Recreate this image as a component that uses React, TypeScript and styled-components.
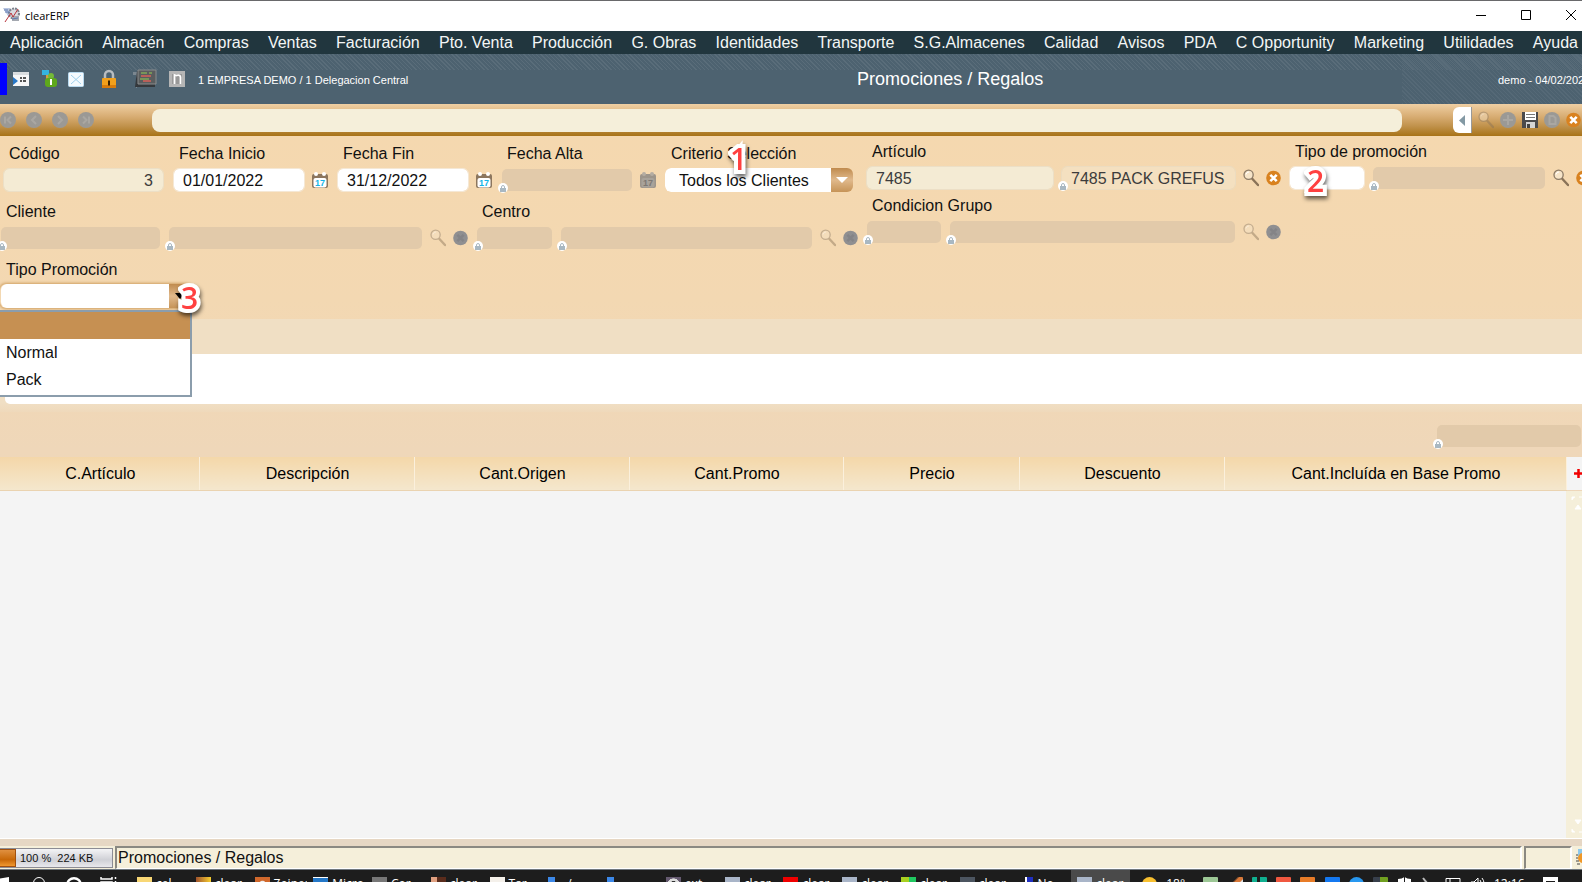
import React from "react";
import styled, { createGlobalStyle, css } from "styled-components";

const GlobalStyle = createGlobalStyle`
  *, *::before, *::after { box-sizing: border-box; }
  body { margin: 0; overflow: hidden; font-family: "Liberation Sans", Arial, sans-serif; font-size: 16px; color: #111; }
  button, input, select { font: inherit; color: inherit; margin: 0; }
  button { border: 0; padding: 0; background: none; }
  svg { display: block; flex: none; }
`;

const App = styled.div`
  display: flex;
  flex-direction: column;
  height: 100vh;
  min-height: 600px;
  overflow: hidden;
  background: linear-gradient(#f5d8af 136px, #f3d8b2 300px, #efd7b9 450px, #e6d7c4 840px);
`;

/* Window title */
const TitleBar = styled.header`
  flex: 0 0 31px;
  display: flex;
  align-items: center;
  gap: 5px;
  padding: 0 2px 2px 3px;
  border-top: 1px solid #69696b;
  background: #fff;
  font: 11px "Open Sans", sans-serif;
  color: #000;
`;
const WindowButtons = styled.div`
  display: flex;
  gap: 35px;
  margin-left: auto;
  padding-right: 4px;
`;

/* Menu */
const MenuBar = styled.nav`
  flex: 0 0 23px;
  display: flex;
  justify-content: space-between;
  align-items: flex-end;
  padding: 0 4px 0 10px;
  background: #21363e;
`;
const MenuItem = styled.a`
  color: #f4f6f6;
  text-decoration: none;
  white-space: nowrap;
  line-height: 22px;
`;

/* Company header */
const CompanyBar = styled.div`
  flex: 0 0 50px;
  display: flex;
  align-items: center;
  background:
    repeating-linear-gradient(45deg, #ffffff12 0 1px, transparent 1px 3px) 0 0 / 100% 16px no-repeat,
    repeating-linear-gradient(45deg, #ffffff0c 0 1px, transparent 1px 3px) 100% 0 / 180px 100% no-repeat,
    #4d6270;
  color: #fff;
  font-size: 11px;
  line-height: 14px;
  white-space: nowrap;
`;
const Marker = styled.div`
  width: 7px;
  height: 32px;
  background: #00f;
`;
const Shortcuts = styled.div`
  display: flex;
  align-items: center;
  justify-content: space-between;
  width: 172px;
  margin: 0 13px 0 6px;
`;
const ScreenTitle = styled.h1`
  flex: 1;
  margin: 0;
  padding-right: 6px;
  font-size: 18px;
  font-weight: 400;
  text-align: center;
`;
const Company = styled.span`
  padding-top: 2px;
`;
const Session = styled(Company)`
  width: 84px;
  overflow: hidden;
`;

/* Record toolbar */
const Toolbar = styled.div`
  flex: 0 0 32px;
  display: flex;
  align-items: center;
  background: linear-gradient(#efcfa3, #d7ac72 40%, #c0914a 70%, #a87318);
`;
const NavButtons = styled.div`
  display: flex;
  gap: 10px;
`;
const QuickSearch = styled.input`
  flex: 1;
  min-width: 0;
  height: 23px;
  margin: 0 51px 0 58px;
  padding: 0 8px;
  border: 0;
  border-radius: 8px;
  background: #f5efda;
`;
const Actions = styled.div`
  display: flex;
  align-items: center;
  gap: 6px;
`;
const CollapseButton = styled.button`
  display: grid;
  place-items: center;
  width: 19px;
  height: 26px;
  border-right: 1px solid #999;
  border-radius: 6px 0 0 6px;
  background: #fff;
`;

/* Form */
const Form = styled.form`
  flex: none;
  display: flex;
  gap: 7px;
  padding-bottom: 11px;
`;
const Panel = styled.div<{ $tight?: boolean }>`
  flex: none;
  display: flex;
  flex-direction: column;
  gap: ${(p) => (p.$tight ? 4 : 8)}px;
  padding-top: ${(p) => (p.$tight ? 4 : 6)}px;
`;
const FormRow = styled.div<{ $spaced?: boolean }>`
  display: flex;
  gap: ${(p) => (p.$spaced ? 9 : 7)}px;
  padding-left: ${(p) => (p.$spaced ? 3 : 0)}px;
`;
const Cell = styled.div`
  position: relative;
`;
const Label = styled.label`
  display: block;
  padding-left: 6px;
  margin-bottom: 2px;
  line-height: 24px;
  white-space: nowrap;
`;
const Controls = styled.div`
  display: flex;
  align-items: center;
  gap: 7px;
`;

type Look = "edit" | "key" | "text" | "off";
const looks = {
  edit: css`background-color: #fff; border-color: #f5e8d5;`,
  key: css`background-color: #f4ebd4; border-color: #ecdfc6; color: #3c3c3c;`,
  text: css`background-color: #f4e0c0; border-color: #ecdcc0; color: #3c3c3c;`,
  off: css`background-color: #e2caaa; border-color: transparent;`,
};
const FieldBox = styled.div<{ $w: number }>`
  position: relative;
  width: ${(p) => p.$w}px;
`;
const Input = styled.input<{ $look: Look; $right?: boolean }>`
  display: block;
  width: 100%;
  height: 24px;
  padding: 1px 10px 0 9px;
  border: 1px solid;
  border-radius: 6px;
  background-clip: padding-box;
  text-align: ${(p) => (p.$right ? "right" : "left")};
  outline: 0;
  ${(p) => looks[p.$look]}
`;
const LockBadge = styled.span`
  position: absolute;
  left: -3px;
  bottom: -1px;
  display: grid;
  place-items: center;
  width: 10px;
  height: 10px;
  border-radius: 5px;
  background: #fff;
`;
const Combo = styled.div`
  position: relative;
  display: flex;
  width: 188px;
  height: 24px;
  border-radius: 6px;
  overflow: hidden;
`;
const Select = styled.select`
  flex: 1;
  appearance: none;
  padding: 0 0 0 14px;
  border: 0;
  border-radius: 6px 0 0 6px;
  background: #fff;
  outline: 0;
`;
const ComboArrow = styled.span`
  display: grid;
  place-items: center;
  width: 22px;
  background: linear-gradient(#c08b4e, #e0b98c 50%, #c69458);
  pointer-events: none;
`;
const OpenCombo = styled(Combo)`
  width: 191px;
  padding-left: 1px;
  box-shadow: 0 0 3px 1px #cf9f60;
`;
const Popup = styled.ul`
  position: absolute;
  z-index: 2;
  left: 0;
  top: 52px;
  width: 192px;
  margin: 0;
  padding: 0 0 2px;
  border: 2px solid #8b9dac;
  border-left: 0;
  background: #fff;
  list-style: none;
`;
const Option = styled.li<{ $active?: boolean }>`
  height: 27px;
  padding-left: 6px;
  line-height: 27px;
  background: ${(p) => (p.$active ? "#c69052" : "#fff")};
`;
const Callout = styled.span<{ $x: number; $y: number }>`
  position: absolute;
  z-index: 3;
  left: ${(p) => p.$x}px;
  top: ${(p) => p.$y}px;
  font: 600 30px/32px "Open Sans", sans-serif;
  color: #ff4040;
  -webkit-text-stroke: 8px #fff;
  paint-order: stroke fill;
  stroke-linejoin: round;
  filter: drop-shadow(1px 3px 2px #0009);
  pointer-events: none;
`;

/* Notes band and totals */
const NotesBand = styled.section`
  flex: none;
  padding: 35px 0 8px 5px;
  background: linear-gradient(#f0dfc4 90%, #efd9bb);
`;
const NotesArea = styled.div`
  height: 50px;
  border-radius: 0 0 0 5px;
  background: #fff;
`;
const TotalsRow = styled.div`
  flex: none;
  display: flex;
  justify-content: flex-end;
  padding: 12px 0 9px;
  overflow: hidden;
`;

/* Lines grid */
const LinesTable = styled.table`
  flex: none;
  width: 100%;
  table-layout: fixed;
  border-collapse: collapse;
`;
const HeadCell = styled.th<{ $w: number }>`
  width: ${(p) => p.$w}px;
  height: 33px;
  padding: 2px 0 0 2px;
  border-right: 1px solid #fbf0dc;
  border-bottom: 1px solid #ead3b0;
  background: linear-gradient(#f4d7a9, #f4e7cd);
  font-weight: 400;
  color: #000;
`;
const AddCell = styled.th`
  width: 16px;
  padding: 0 0 2px 7px;
  background: #f4f4f4;
  overflow: hidden;
`;
const LinesBody = styled.div`
  flex: 1;
  display: flex;
  justify-content: flex-end;
  border-bottom: 1px solid #fff;
  background: #f4f4f4;
`;
const ScrollTrack = styled.div`
  display: flex;
  flex-direction: column;
  justify-content: space-between;
  align-items: flex-end;
  width: 16px;
  padding: 5px 0;
  background: #f5efda;
`;

/* Status bar */
const StatusBar = styled.footer`
  flex: 0 0 30px;
  display: flex;
  align-items: stretch;
  gap: 2px;
  padding-top: 7px;
  border-bottom: 1px solid #707880;
  background: linear-gradient(#e6d7c4 7px, #f5efda 7px);
`;
const Memory = styled.div`
  display: flex;
  align-items: center;
  width: 113px;
  margin: 2px 0 1px 0;
  border: 1px solid #8c8c94;
  border-left: 0;
  background: linear-gradient(#f4f4f6, #cfd0d6 60%, #e8e8ec);
  font-size: 11px;
  white-space: pre;
`;
const MemoryUsed = styled.span`
  width: 16px;
  height: 100%;
  margin-right: 4px;
  border: 1px solid #a05010;
  border-left: 0;
  background: linear-gradient(#e09040, #c86808 60%, #f09830);
`;
const StatusText = styled.div<{ $w?: number }>`
  flex: ${(p) => (p.$w ? `0 0 ${p.$w}px` : "1")};
  padding-left: 1px;
  border: 2px solid #fff;
  border-top-color: #8b8982;
  border-left-color: #8b8982;
  border-bottom-width: 1px;
  line-height: 20px;
`;
const StatusIcon = styled.div`
  width: 6px;
  margin-left: 2px;
  overflow: hidden;
  padding-top: 3px;
`;

/* Desktop task bar */
const TaskBar = styled.div`
  flex: 0 0 12px;
  display: flex;
  align-items: flex-start;
  overflow: hidden;
  background: #1d1d1d;
  color: #fff;
  font: 12px "Open Sans", sans-serif;
`;
const SystemButtons = styled.div`
  flex: none;
  display: flex;
  gap: 17px;
  width: 131px;
  padding-top: 7px;
`;
const Apps = styled.div`
  flex: 1;
  display: grid;
  grid-template-columns: repeat(17, minmax(0, 1fr));
`;
const AppButton = styled.button<{ $active?: boolean }>`
  display: flex;
  gap: 4px;
  height: 40px;
  padding: 7px 0 0 6px;
  overflow: hidden;
  align-items: flex-start;
  line-height: 14px;
  white-space: nowrap;
  background: ${(p) => (p.$active ? "#4a4a4a" : "none")};
`;
const AppIcon = styled.span<{ $c: string }>`
  flex: 0 0 15px;
  height: 15px;
  background: ${(p) => p.$c};
`;
const Tray = styled.div`
  flex: 0 0 452px;
  display: flex;
  justify-content: space-between;
  padding: 7px 24px 0 12px;
  line-height: 14px;
`;
const TrayIcon = styled(AppIcon)<{ $round?: boolean }>`
  border-radius: ${(p) => (p.$round ? 8 : 1)}px;
`;

/* Icons */
const SearchIcon = ({ dim }: { dim?: boolean }) => (
  <svg width="16" height="18" viewBox="0 0 16 18" opacity={dim ? 0.45 : 1}>
    <path d="M9 9.5 15 16" stroke="#8a7358" strokeWidth="2.4" strokeLinecap="round" />
    <circle cx="5.6" cy="5.8" r="4.6" fill="#f6e4c8" stroke="#8b7a66" strokeWidth="1.3" />
    <path d="M3 5.500a3 3 0 0 1 3-2.500" stroke="#fff" fill="none" />
  </svg>
);
const ClearIcon = ({ dim }: { dim?: boolean }) => (
  <svg width="16" height="16" viewBox="0 0 16 16">
    <circle cx="7.500" cy="8" r="7.300" fill={dim ? "#8f8f91" : "#d9821f"} />
    <path d="m4.300 4.800 6.400 6.400m0-6.400-6.400 6.400" stroke={dim ? "#848487" : "#fff"} strokeWidth="2.600" />
  </svg>
);
const CalendarIcon = ({ dim }: { dim?: boolean }) => (
  <svg width="16" height="18" viewBox="0 0 16 18">
    <rect y="3" width="16" height="14" rx="2" fill={dim ? "#9d958b" : "#8c765e"} />
    <rect x="1.500" y="7" width="13" height="9.500" rx="2" fill={dim ? "#a8a29a" : "#fff"} />
    <circle cx="4" cy="3" r="2" fill={dim ? "#b5ada2" : "#fff"} />
    <circle cx="12" cy="3" r="2" fill={dim ? "#b5ada2" : "#fff"} />
    <text x="8" y="15" textAnchor="middle" fontSize="9" fontWeight="bold" fill={dim ? "#7d7873" : "#14b4e6"}>17</text>
  </svg>
);
const LockGlyph = () => (
  <svg width="6" height="7" viewBox="0 0 6 7">
    <path d="M1.500 3V2a1.500 1.500 0 0 1 3 0v1" fill="none" stroke="#a9b8c2" />
    <rect y="3" width="6" height="4" fill="#a9b8c2" />
  </svg>
);
const RoundIcon = ({ d }: { d: string }) => (
  <svg width="16" height="16" viewBox="0 0 16 16">
    <circle cx="8" cy="8" r="8" fill="#9b9995" />
    <path d={d} fill="none" stroke="#aaa7a2" strokeWidth="2" />
  </svg>
);
const AppLogo = () => (
  <svg width="17" height="16" viewBox="0 0 17 16">
    <path d="M0 1h7l2 5-4 3z" fill="#b9c6e0" />
    <circle cx="11" cy="6.500" r="5" fill="#d9dbe0" stroke="#7d828c" strokeWidth="2" strokeDasharray="2 1" />
    <path d="M9 9h7v5H9z" fill="#a4a8b0" />
    <path d="M1 3h4M2 5h5M9 12l6-1" stroke="#5f78b0" />
    <path d="m2 15 6-9 2 4 5-8" fill="none" stroke="#b8323a" />
  </svg>
);

const Locked = ({ w, id, value = "", look = "off", label }: { w: number; id?: string; value?: string; look?: Look; label?: string }) => (
  <FieldBox $w={w}>
    <Input $look={look} id={id} readOnly value={value} aria-label={label} />
    <LockBadge><LockGlyph /></LockBadge>
  </FieldBox>
);
const IconButton = ({ label, children }: { label: string; children: React.ReactNode }) => (
  <button type="button" aria-label={label}>{children}</button>
);
const Lookup = ({ dim }: { dim?: boolean }) => (
  <>
    <IconButton label="Buscar"><SearchIcon dim={dim} /></IconButton>
    <IconButton label="Borrar"><ClearIcon dim={dim} /></IconButton>
  </>
);

const menu = ["Aplicación", "Almacén", "Compras", "Ventas", "Facturación", "Pto. Venta", "Producción", "G. Obras", "Identidades", "Transporte", "S.G.Almacenes", "Calidad", "Avisos", "PDA", "C Opportunity", "Marketing", "Utilidades", "Ayuda"];
const columns: [string, number][] = [["C.Artículo", 199], ["Descripción", 215], ["Cant.Origen", 215], ["Cant.Promo", 214], ["Precio", 176], ["Descuento", 205], ["Cant.Incluída en Base Promo", 342]];
const navIcons: [string, string][] = [["Primero", "M5 4.500v7M11 4.500 7.500 8l3.500 3.500"], ["Anterior", "M10 4 6 8l4 4"], ["Siguiente", "m6 4 4 4-4 4"], ["Último", "m5 4.500 3.500 3.500L5 11.500M11 4.500v7"]];
const apps: [string, string][] = [
  ["#f8d775", "cel"], ["linear-gradient(90deg,#a0522d,#f8d030)", "clear"], ["radial-gradient(#eee 30%,#d0682c 40%)", "Zoiper"], ["linear-gradient(#fff 1px,#2478c8 1px)", "Micro"],
  ["#777", "Cor"], ["linear-gradient(90deg,#e0a080 40%,#5a2c1c 40%)", "clear"], ["#f4f0ea", "Tar"], ["linear-gradient(90deg,#3c88e8 50%,transparent 50%)", "/"],
  ["linear-gradient(90deg,#3c88e8 50%,transparent 50%)", ""], ["radial-gradient(#333 30%,#ddd 35% 55%,#655a70 60%)", "ext"], ["#a9b5c8", "clear"], ["#f00000", "clear"], ["#a9b5c8", "clear"],
  ["linear-gradient(90deg,#a8d020 50%,#20c860 50%)", "clear"], ["#4c5560", "clear"], ["linear-gradient(90deg,transparent 50%,#fff 50% 60%,#2030c0 60%)", "No"], ["#a9b5c8", "clear"],
];
const tray = ["#9cc795", "linear-gradient(135deg,#1d1d1d 30%,#d87838 40% 55%,#ddd 60%)", "linear-gradient(90deg,#10b090 35%,#1d1d1d 35% 50%,#10b090 50%)", "#f05840", "#e87c28", "#1478f0", "#2898f0", "linear-gradient(90deg,#38404c 50%,#70a020 50%)"];

export default function PromotionsScreen() {
  return (
    <>
      <GlobalStyle />
      <App>
        <TitleBar>
          <AppLogo />
          <span>clearERP</span>
          <WindowButtons>
            <IconButton label="Minimizar"><svg width="10" height="10"><path d="M0 5.500h10" stroke="#000" /></svg></IconButton>
            <IconButton label="Maximizar"><svg width="10" height="10"><path d="M.5.5h9v9h-9z" fill="none" stroke="#000" /></svg></IconButton>
            <IconButton label="Cerrar"><svg width="10" height="10"><path d="m0 0 10 10M10 0 0 10" stroke="#000" /></svg></IconButton>
          </WindowButtons>
        </TitleBar>

        <MenuBar>{menu.map((m) => <MenuItem key={m} href="#">{m}</MenuItem>)}</MenuBar>

        <CompanyBar>
          <Marker />
          <Shortcuts>
            <IconButton label="Agenda">
              <svg width="16" height="16"><path d="M0 1h16v14H0z" fill="#f6f7f8" /><path d="M0 1h16v3H0z" fill="#d9dde0" /><path d="m0 6 5 4-5 4z" fill="#2878c8" /><path d="M7 7h2m1 0h3M7 10h2m1 0h3" stroke="#555" strokeWidth="2" /></svg>
            </IconButton>
            <IconButton label="Usuario">
              <svg width="16" height="18"><path d="M1 0h7v5H1z" fill="#34b4e0" /><path d="M5 5h3v5H5z" fill="#d0a040" /><circle cx="10" cy="6" r="3" fill="#74b838" /><rect x="4" y="8" width="12" height="9" rx="3" fill="#5ea81c" /><path d="M10 9v6" stroke="#fff" strokeWidth="2" /></svg>
            </IconButton>
            <IconButton label="Correo">
              <svg width="16" height="15"><rect x=".5" y=".5" width="15" height="14" rx="1" fill="#f4fafe" stroke="#b8daf0" /><path d="m3 3 10 9M13 3 3 12" fill="none" stroke="#9fd0ec" /></svg>
            </IconButton>
            <IconButton label="Bloquear">
              <svg width="26" height="20"><path d="M9 10V6a4 4 0 0 1 8 0v4" fill="none" stroke="#b8bcc0" strokeWidth="2.500" /><rect x="6" y="9" width="14" height="10" rx="1" fill="#f2a01c" /><path d="M6 16h14v3H6z" fill="#d87c0c" /><path d="M13 11.500v5" stroke="#3a2200" strokeWidth="2" /></svg>
            </IconButton>
            <IconButton label="Terminal">
              <svg width="24" height="20"><path d="M0 3h4v16H3V6H0z" fill="#7b8790" /><path d="M4 2h18v16H2z" fill="#34383c" /><path d="M5 1h18v14H5z" fill="#5a5d5e" stroke="#8a8d8e" /><path d="M8 4h6m2 0h3M7 10h9" stroke="#80a858" strokeWidth="1.500" /><path d="M8 7h10M10 12h8" stroke="#d86058" strokeWidth="1.500" /></svg>
            </IconButton>
            <IconButton label="Notas">
              <svg width="16" height="16"><path d="M0 0h16v16H0z" fill="#b5b5b5" /><path d="M3 3h10v10H3z" fill="#989898" /><path d="M5.500 13V4l2 .5c3-1 4 .5 4 2V13" fill="none" stroke="#fff" strokeWidth="1.800" /></svg>
            </IconButton>
          </Shortcuts>
          <Company>1 EMPRESA DEMO / 1 Delegacion Central</Company>
          <ScreenTitle>Promociones / Regalos</ScreenTitle>
          <Session>demo - 04/02/2022</Session>
        </CompanyBar>

        <Toolbar>
          <NavButtons>
            {navIcons.map(([n, d]) => <IconButton key={n} label={n}><RoundIcon d={d} /></IconButton>)}
          </NavButtons>
          <QuickSearch aria-label="Búsqueda rápida" />
          <Actions>
            <CollapseButton aria-label="Plegar"><svg width="6" height="11"><path d="M6 0v11L0 5.500z" fill="#8399a4" /></svg></CollapseButton>
            <IconButton label="Buscar"><SearchIcon dim /></IconButton>
            <IconButton label="Nuevo"><RoundIcon d="M8 3v10M3 8h10" /></IconButton>
            <IconButton label="Guardar">
              <svg width="16" height="16"><path d="M0 0h16v16H0z" fill="#4a4a4c" /><path d="M3 0h11v8H3z" fill="#fff" /><path d="M4 2.500h9M4 5.500h9" stroke="#777" /><path d="M4 10h9v6H4z" fill="#d4d4d4" /><path d="M5 12h3v4H5z" fill="#444" /></svg>
            </IconButton>
            <IconButton label="Eliminar"><RoundIcon d="M5.500 4h4l2 2v6h-6z" /></IconButton>
            <IconButton label="Cerrar"><ClearIcon /></IconButton>
          </Actions>
        </Toolbar>

        <Form>
          <Panel>
            <FormRow $spaced>
              <Cell>
                <Label htmlFor="codigo">Código</Label>
                <FieldBox $w={161}><Input id="codigo" $look="key" $right defaultValue="3" /></FieldBox>
              </Cell>
              <Cell>
                <Label htmlFor="inicio">Fecha Inicio</Label>
                <Controls>
                  <FieldBox $w={132}><Input id="inicio" $look="edit" defaultValue="01/01/2022" /></FieldBox>
                  <IconButton label="Calendario"><CalendarIcon /></IconButton>
                </Controls>
              </Cell>
              <Cell>
                <Label htmlFor="fin">Fecha Fin</Label>
                <Controls>
                  <FieldBox $w={132}><Input id="fin" $look="edit" defaultValue="31/12/2022" /></FieldBox>
                  <IconButton label="Calendario"><CalendarIcon /></IconButton>
                </Controls>
              </Cell>
              <Cell>
                <Label htmlFor="alta">Fecha Alta</Label>
                <Controls>
                  <Locked w={132} id="alta" />
                  <IconButton label="Calendario"><CalendarIcon dim /></IconButton>
                </Controls>
              </Cell>
              <Cell>
                <Label htmlFor="criterio">Criterio Selección</Label>
                <Combo>
                  <Select id="criterio"><option>Todos los Clientes</option></Select>
                  <ComboArrow><svg width="12" height="6"><path d="M0 0h12L6 6z" fill="#fff" /></svg></ComboArrow>
                </Combo>
                <Callout $x={65} $y={1}>1</Callout>
              </Cell>
            </FormRow>
            <FormRow>
              <Cell>
                <Label htmlFor="cliente">Cliente</Label>
                <Controls>
                  <Locked w={161} id="cliente" />
                  <Locked w={255} label="Nombre del cliente" />
                  <Lookup dim />
                </Controls>
              </Cell>
              <Cell>
                <Label htmlFor="centro">Centro</Label>
                <Controls>
                  <Locked w={77} id="centro" />
                  <Locked w={253} label="Nombre del centro" />
                  <Lookup dim />
                </Controls>
              </Cell>
            </FormRow>
            <FormRow>
              <Cell>
                <Label htmlFor="tipo">Tipo Promoción</Label>
                <OpenCombo>
                  <Select id="tipo" defaultValue=""><option value=""></option></Select>
                  <ComboArrow><svg width="10" height="6"><path d="M0 0h10L5 6z" fill="#000" /></svg></ComboArrow>
                </OpenCombo>
                <Popup role="listbox" aria-label="Tipo Promoción">
                  <Option role="option" aria-selected="true" $active />
                  <Option role="option" aria-selected="false">Normal</Option>
                  <Option role="option" aria-selected="false">Pack</Option>
                </Popup>
                <Callout $x={181} $y={24}>3</Callout>
              </Cell>
            </FormRow>
          </Panel>

          <Panel $tight>
            <FormRow>
              <Cell>
                <Label htmlFor="articulo">Artículo</Label>
                <Controls>
                  <FieldBox $w={188}><Input id="articulo" $look="key" defaultValue="7485" /></FieldBox>
                  <Locked w={175} look="text" value="7485 PACK GREFUS" label="Nombre del artículo" />
                  <Lookup />
                </Controls>
              </Cell>
              <Cell>
                <Label htmlFor="clase">Tipo de promoción</Label>
                <Controls>
                  <FieldBox $w={76}><Input id="clase" $look="edit" /></FieldBox>
                  <Locked w={174} label="Descripción del tipo" />
                  <Lookup />
                </Controls>
                <Callout $x={18} $y={25}>2</Callout>
              </Cell>
            </FormRow>
            <FormRow>
              <Cell>
                <Label htmlFor="grupo">Condicion Grupo</Label>
                <Controls>
                  <Locked w={76} id="grupo" />
                  <Locked w={287} label="Nombre del grupo" />
                  <Lookup dim />
                </Controls>
              </Cell>
            </FormRow>
          </Panel>
        </Form>

        <NotesBand><NotesArea /></NotesBand>
        <TotalsRow><Locked w={146} label="Total" /></TotalsRow>

        <LinesTable>
          <thead>
            <tr>
              {columns.map(([c, w]) => <HeadCell key={c} $w={w} scope="col">{c}</HeadCell>)}
              <AddCell>
                <IconButton label="Añadir línea"><svg width="9" height="9"><path d="M4.500 0v9M0 4.500h9" stroke="#f00000" strokeWidth="2.500" /></svg></IconButton>
              </AddCell>
            </tr>
          </thead>
        </LinesTable>
        <LinesBody>
          <ScrollTrack>
            <svg width="11" height="16"><path d="M1 4V1h3M8 1h3M4 13l3-4 3 4z" fill="#fff" stroke="#fff" /></svg>
            <svg width="11" height="16"><path d="M4 3h6L7 7zM1 12v3h3M8 15h3" fill="#fff" stroke="#fff" /></svg>
          </ScrollTrack>
        </LinesBody>

        <StatusBar>
          <Memory><MemoryUsed />100 %  224 KB</Memory>
          <StatusText>Promociones / Regalos</StatusText>
          <StatusText $w={48} />
          <StatusIcon>
            <svg width="16" height="16"><path d="M2 0h8v8H2z" fill="#8cc8ec" /><circle cx="7" cy="9" r="5" fill="#f09828" /><path d="M0 6h2M0 9h2M0 12h3M1 15h3" stroke="#444" /></svg>
          </StatusIcon>
        </StatusBar>

        <TaskBar>
          <SystemButtons>
            <IconButton label="Inicio"><svg width="16" height="16"><path d="M0 1.500 9 0v16H0z" fill="#fff" /></svg></IconButton>
            <IconButton label="Buscar"><svg width="16" height="16"><circle cx="6" cy="6" r="5.500" fill="none" stroke="#fff" /></svg></IconButton>
            <IconButton label="Asistente"><svg width="16" height="16"><circle cx="8" cy="8" r="6.800" fill="none" stroke="#fff" strokeWidth="2.400" /></svg></IconButton>
            <IconButton label="Vista de tareas"><svg width="18" height="16"><path d="M2 0v2h11V0M2 5h11v8H2zM16.500 0v2m0 2v6" fill="none" stroke="#fff" strokeWidth="1.500" /></svg></IconButton>
          </SystemButtons>
          <Apps>
            {apps.map(([c, t], i) => (
              <AppButton key={i} $active={i === 16} aria-label={t || "Aplicación"}><AppIcon $c={c} />{t}</AppButton>
            ))}
          </Apps>
          <Tray>
            <TrayIcon $c="#f8c030" $round /><span>18°</span><span />
            {tray.map((c, i) => <TrayIcon key={i} $c={c} $round={i === 6} />)}
            <svg width="15" height="16"><path d="M1 2q4 0 6.500-2Q10 2 14 2v6q-1 5-6.500 8Q2 13 1 8z" fill="#fff" /><path d="M7.500 0v16" stroke="#1d1d1d" /></svg>
            <svg width="14" height="16"><path d="m2 1 8 10" stroke="#bbb" strokeWidth="2" /></svg>
            <svg width="16" height="16"><path d="M1 1.500h14V10H1zM5 2v8" fill="none" stroke="#fff" /></svg>
            <svg width="15" height="16"><path d="M1 5h3l4-4v12L4 9H1zM10 3q3 3 0 7M12 1q4 5 0 11" fill="none" stroke="#fff" /></svg>
            <span>12:16</span><span />
            <svg width="15" height="16"><path d="M0 0h15v12H0z" fill="#fff" /><path d="M3 4.500h9" stroke="#1d1d1d" /></svg>
          </Tray>
        </TaskBar>
      </App>
    </>
  );
}
